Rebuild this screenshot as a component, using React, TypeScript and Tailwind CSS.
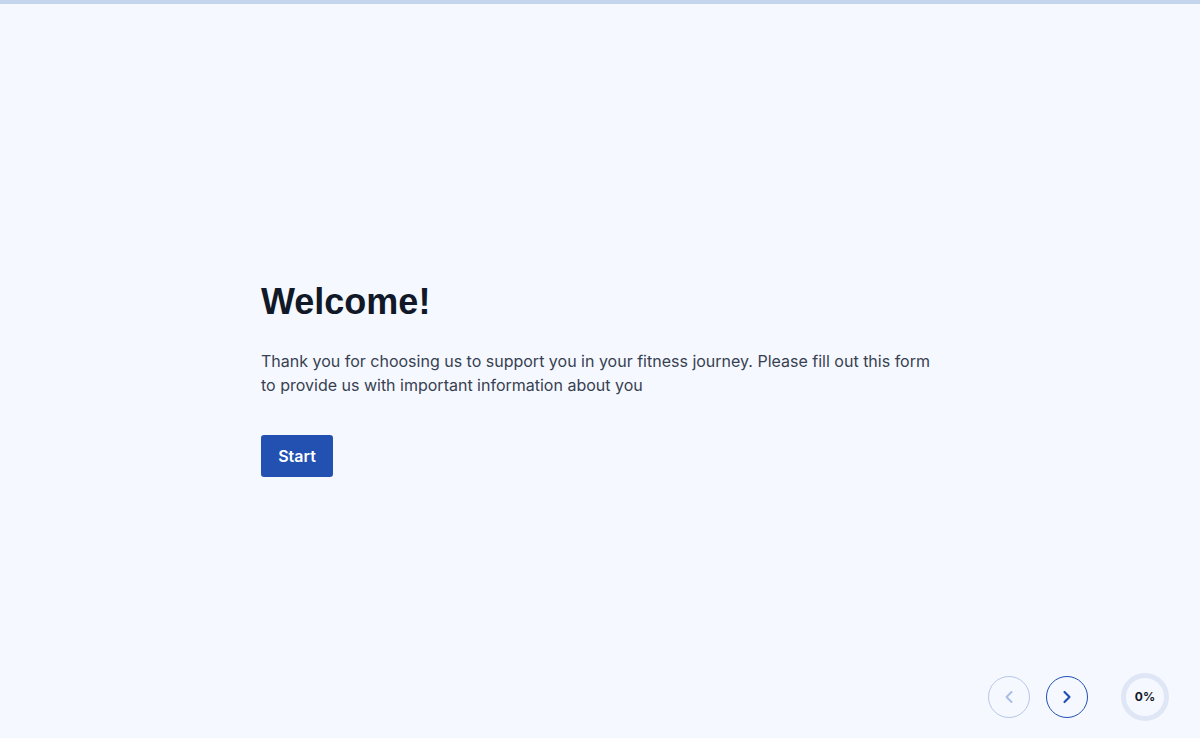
import React from "react";

export default function App() {
  return (
    <div
      className="relative h-[738px] w-full overflow-hidden bg-[#f5f8ff]"
      style={{ fontFamily: "Inter, 'Noto Sans', sans-serif" }}
    >
      <div className="h-[4px] w-full bg-[#c6d5ee]" />
      <div className="flex h-[734px] items-center justify-center">
        <div className="mt-[14px] w-[680px] pl-[1px]">
          <h1
            className="text-[36px] font-bold leading-[44px] text-[#111827]"
            style={{ fontFamily: "'Liberation Sans', Arial, sans-serif" }}
          >
            Welcome!
          </h1>
          <p className="mt-[25px] text-[16px] leading-[24px] text-[#374151]">
            Thank you for choosing us to support you in your fitness journey. Please fill out this form to provide us
            with important information about you
          </p>
          <button className="mt-[38px] h-[42px] w-[72px] rounded-[3px] bg-[#2251b1] text-[16px] font-semibold text-white">
            Start
          </button>
        </div>
      </div>
      <div className="absolute bottom-[17px] right-[31px] flex items-center">
        <button className="flex h-[42px] w-[42px] items-center justify-center rounded-full border border-[#b7c7e8] text-[#a9bde6]">
          <svg width="20" height="20" viewBox="0 0 24 24" fill="none" stroke="currentColor" strokeWidth="2.4" strokeLinecap="round" strokeLinejoin="round">
            <path d="M15 6l-6 6 6 6" />
          </svg>
        </button>
        <button className="ml-[16px] flex h-[42px] w-[42px] items-center justify-center rounded-full border border-[#2251b1] text-[#2251b1]">
          <svg width="20" height="20" viewBox="0 0 24 24" fill="none" stroke="currentColor" strokeWidth="2.6" strokeLinecap="round" strokeLinejoin="round">
            <path d="M9 6l6 6-6 6" />
          </svg>
        </button>
        <div className="ml-[33px] flex h-[48px] w-[48px] items-center justify-center rounded-full border-[5px] border-[#dfe6f5] text-[12px] font-bold text-[#111827]">
          0%
        </div>
      </div>
    </div>
  );
}
